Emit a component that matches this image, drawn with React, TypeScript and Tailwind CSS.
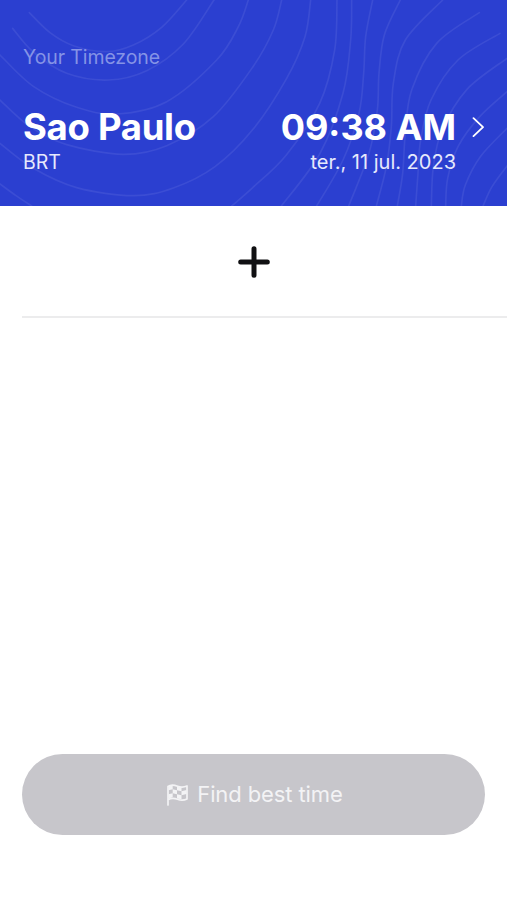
import { ReactNode } from "react";

type Point = [number, number];

const contours: Point[][] = [
  [[88, 38], [150, 98], [220, 137], [320, 155], [400, 135], [485, 82], [560, 0]],
  [[38, 85], [100, 156], [200, 220], [325, 240], [440, 212], [550, 132], [642, 0]],
  [[0, 165], [100, 259], [230, 322], [350, 342], [500, 305], [650, 180], [715, 80], [745, 0]],
  [[0, 300], [90, 380], [200, 434], [370, 463], [500, 437], [640, 350], [759, 200], [820, 90], [845, 0]],
  [[0, 430], [100, 505], [230, 563], [400, 587], [520, 564], [645, 500], [759, 388], [860, 235], [915, 110], [932, 0]],
  [[0, 552], [48, 587], [95, 618]],
  [[695, 618], [759, 562], [859, 465], [959, 310], [1004, 150], [1011, 0]],
  [[844, 618], [959, 462], [1029, 280], [1052, 120], [1055, 0]],
  [[950, 618], [1029, 480], [1077, 340], [1091, 220], [1097, 110], [1118, 0]],
  [[1046, 618], [1107, 460], [1132, 330], [1137, 220], [1153, 105], [1201, 0]],
  [[1129, 618], [1159, 500], [1174, 380], [1180, 250], [1216, 120], [1328, 0]],
  [[1192, 618], [1208, 520], [1216, 400], [1235, 270], [1310, 130], [1438, 38]],
  [[1247, 618], [1254, 520], [1262, 420], [1293, 300], [1374, 180], [1500, 100]],
  [[1294, 618], [1300, 500], [1326, 390], [1401, 268], [1521, 175]],
  [[1337, 618], [1343, 535], [1374, 440], [1439, 350], [1521, 275]],
  [[1384, 618], [1396, 555], [1441, 470], [1521, 385]],
  [[1449, 618], [1476, 560], [1521, 498]],
];

// Catmull-Rom spline through the points
function smoothPath(points: Point[]) {
  let d = `M${points[0].join(" ")}`;
  for (let i = 0; i < points.length - 1; i++) {
    const p0 = points[i - 1] ?? points[i];
    const p1 = points[i];
    const p2 = points[i + 1];
    const p3 = points[i + 2] ?? p2;
    d += `C${p1[0] + (p2[0] - p0[0]) / 6} ${p1[1] + (p2[1] - p0[1]) / 6} ${
      p2[0] - (p3[0] - p1[0]) / 6
    } ${p2[1] - (p3[1] - p1[1]) / 6} ${p2[0]} ${p2[1]}`;
  }
  return d;
}

export default function App() {
  return (
    <main className="flex h-screen flex-col bg-white font-['Inter','Liberation_Sans',sans-serif]">
      <Header />
      <AddTimezone />
      <footer className="mt-auto px-[22px] pb-[65px]">
        <FindButton>Find best time</FindButton>
      </footer>
    </main>
  );
}

function Header() {
  return (
    <header className="relative h-[206px] shrink-0 overflow-hidden bg-[#2b3fd0] px-[23px] pt-[45px] text-white">
      <Contours />
      <div className="relative">
        <p className="text-[19.5px] leading-6 tracking-[-0.1px] text-[#8593e6]">
          Your Timezone
        </p>
        <div className="mt-[35px] flex items-start">
          <div>
            <h1 className="text-[36.5px] leading-[46px] font-bold tracking-[-0.3px] whitespace-nowrap">
              Sao Paulo
            </h1>
            <p className="text-[19.5px] leading-[25px] text-[#e6e9fc]">BRT</p>
          </div>
          <div className="ml-auto text-right">
            <p className="text-[36px] leading-[46px] font-bold whitespace-nowrap">
              09:38 AM
            </p>
            <p className="text-[20px] leading-[25px] text-[#e6e9fc]">
              ter., 11 jul. 2023
            </p>
          </div>
          <svg
            className="mt-[13px] ml-4 h-5 w-3"
            viewBox="0 0 12 20"
            fill="none"
            stroke="currentColor"
            strokeWidth="1.8"
            strokeLinecap="round"
            strokeLinejoin="round"
          >
            <path d="M1.500 1.200 11 10.200 1.500 19.200" />
          </svg>
        </div>
      </div>
    </header>
  );
}

function Contours() {
  return (
    <svg
      className="absolute inset-0 h-[206px] w-[507px]"
      viewBox="0 0 1521 618"
      fill="none"
      stroke="#3b4dd4"
      strokeWidth="5"
      strokeLinecap="round"
    >
      {contours.map((points, i) => (
        <path key={i} d={smoothPath(points)} />
      ))}
    </svg>
  );
}

function AddTimezone() {
  return (
    <button
      aria-label="Add timezone"
      className="ml-[22px] flex h-28 shrink-0 justify-center border-b-2 border-[#ececed] pt-10 pr-[21px]"
    >
      <svg
        className="size-8"
        viewBox="0 0 32 32"
        stroke="#101012"
        strokeWidth="5"
        strokeLinecap="round"
      >
        <path d="M16 2.700v26.600M2.700 16h26.600" />
      </svg>
    </button>
  );
}

function FindButton({ children }: { children: ReactNode }) {
  return (
    <button className="flex h-[81px] w-full items-center justify-center gap-[9px] rounded-full bg-[#c7c6cb] pl-[3px] text-[22px] tracking-[-0.1px] text-[#f3f3f5]">
      <FlagIcon />
      <span>{children}</span>
    </button>
  );
}

function FlagIcon() {
  return (
    <svg className="h-[22px] w-[21px]" viewBox="0 0 21 22" fill="none">
      <path
        d="M1 21V2.500C4 .3 7.500 1 10.500 2.200S17 3.300 20 2v13c-3 1.500-6.500 1.500-9.500.3S4 14 1 15.700"
        stroke="currentColor"
        strokeWidth="1.700"
        strokeLinecap="round"
        strokeLinejoin="round"
      />
      <path
        d="M1.500 2.300 5.700 1.200v4L1.500 6.200zM10 2.200l4.500 1v4l-4.500-1zM5.700 5.200l4.300 1v4l-4.300-1zM14.500 7.200 19.500 6v4l-5 1.200zM1.500 10.200l4.200-1v4l-4.200 1.200zM10 10.200l4.500 1v4l-4.500-.8z"
        fill="currentColor"
      />
    </svg>
  );
}
